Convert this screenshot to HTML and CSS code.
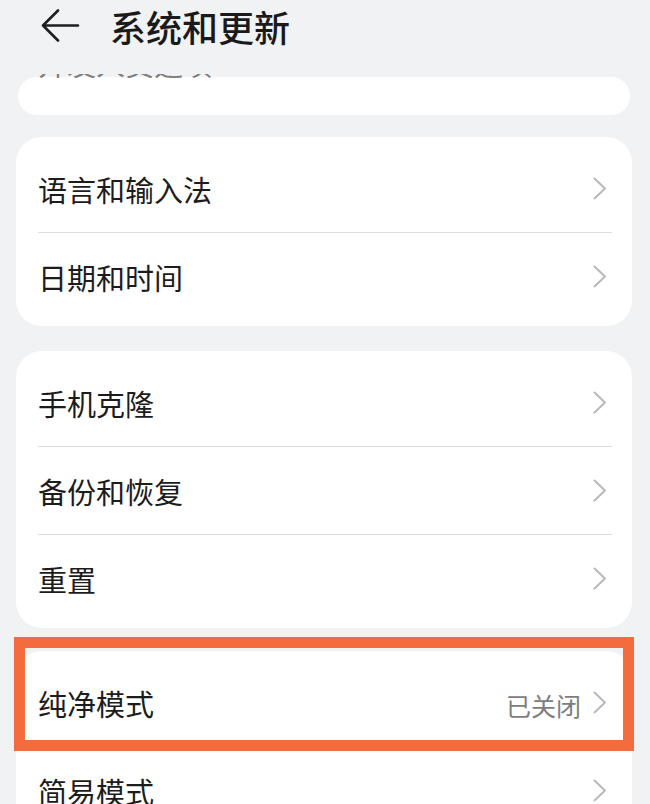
FILE: index.html
```html
<!DOCTYPE html>
<html lang="zh-CN">
<head>
<meta charset="utf-8">
<title>系统和更新</title>
<link rel="stylesheet" href="styles.css">
</head>
<body>
<div class="page">
  <header class="header">
    <svg class="back" width="40" height="34" viewBox="0 0 40 34" aria-hidden="true">
      <path d="M3 16.5 H38 M18 1.5 L3 16.5 L18 31.5" fill="none" stroke="#1f1f1f" stroke-width="2.6" stroke-linecap="round" stroke-linejoin="round"/>
    </svg>
    <h1 class="title">系统和更新</h1>
  </header>

  <div class="peek">
    <div class="peek-clip"><span class="peek-text">开发人员选项</span></div>
  </div>

  <section class="card">
    <div class="row"><span class="label">语言和输入法</span><svg class="chev" width="14" height="23" viewBox="0 0 14 23"><polyline points="1.5,1.5 12,11.5 1.5,21.5" fill="none" stroke="#b9b9b9" stroke-width="2" stroke-linecap="round" stroke-linejoin="round"/></svg></div>
    <div class="divider"></div>
    <div class="row"><span class="label">日期和时间</span><svg class="chev" width="14" height="23" viewBox="0 0 14 23"><polyline points="1.5,1.5 12,11.5 1.5,21.5" fill="none" stroke="#b9b9b9" stroke-width="2" stroke-linecap="round" stroke-linejoin="round"/></svg></div>
  </section>

  <section class="card">
    <div class="row"><span class="label">手机克隆</span><svg class="chev" width="14" height="23" viewBox="0 0 14 23"><polyline points="1.5,1.5 12,11.5 1.5,21.5" fill="none" stroke="#b9b9b9" stroke-width="2" stroke-linecap="round" stroke-linejoin="round"/></svg></div>
    <div class="divider"></div>
    <div class="row"><span class="label">备份和恢复</span><svg class="chev" width="14" height="23" viewBox="0 0 14 23"><polyline points="1.5,1.5 12,11.5 1.5,21.5" fill="none" stroke="#b9b9b9" stroke-width="2" stroke-linecap="round" stroke-linejoin="round"/></svg></div>
    <div class="divider"></div>
    <div class="row"><span class="label">重置</span><svg class="chev" width="14" height="23" viewBox="0 0 14 23"><polyline points="1.5,1.5 12,11.5 1.5,21.5" fill="none" stroke="#b9b9b9" stroke-width="2" stroke-linecap="round" stroke-linejoin="round"/></svg></div>
  </section>

  <section class="card card-last">
    <div class="row"><span class="label">纯净模式</span><span class="value">已关闭</span><svg class="chev" width="14" height="23" viewBox="0 0 14 23"><polyline points="1.5,1.5 12,11.5 1.5,21.5" fill="none" stroke="#b9b9b9" stroke-width="2" stroke-linecap="round" stroke-linejoin="round"/></svg></div>
    <div class="divider"></div>
    <div class="row"><span class="label">简易模式</span><svg class="chev" width="14" height="23" viewBox="0 0 14 23"><polyline points="1.5,1.5 12,11.5 1.5,21.5" fill="none" stroke="#b9b9b9" stroke-width="2" stroke-linecap="round" stroke-linejoin="round"/></svg></div>
    <div class="highlight"></div>
  </section>
</div>
</body>
</html>
```

FILE: styles.css
```css
html, body {
  margin: 0;
  padding: 0;
  height: 804px;
  overflow: hidden;
  background: #f1f2f4;
}

body {
  font-family: "Noto Sans CJK SC", "Noto Sans", sans-serif;
  color: #1c1c1c;
}

.page {
  display: flex;
  flex-direction: column;
}

.header {
  height: 58px;
  display: flex;
  align-items: center;
  padding-left: 40px;
}

.back {
  margin-bottom: 6px;
  flex: none;
}

.title {
  margin: 0 0 6px 30px;
  font-size: 36px;
  font-weight: 500;
  line-height: 40px;
  color: #1a1a1a;
}

.peek {
  position: relative;
  margin: 19px 20px 0 18px;
  height: 38px;
  border-radius: 19px;
  background: #ffffff;
}

.peek-clip {
  position: absolute;
  top: -3px;
  left: 20px;
  height: 4px;
  overflow: hidden;
  opacity: 0.6;
}

.peek-text {
  display: block;
  font-size: 29px;
  line-height: 29px;
  margin-top: -25px;
  color: #333;
  white-space: nowrap;
}

.card {
  position: relative;
  margin: 22px 18px 0 16px;
  padding: 8px 0 6px;
  background: #ffffff;
  border-radius: 26px;
}

.card + .card {
  margin-top: 25px;
}

.card.card-last {
  margin-top: 23px;
}

.row {
  height: 87px;
  display: flex;
  align-items: center;
  padding: 0 25px 0 22px;
}

.label {
  flex: 1;
  font-size: 29px;
  line-height: 34px;
  padding-top: 1px;
  color: #1c1c1c;
}

.value {
  font-size: 25px;
  line-height: 30px;
  padding-top: 4px;
  color: #7d7d7d;
  margin-right: 12px;
}

.chev {
  flex: none;
  display: block;
}

.divider {
  height: 1px;
  margin: 0 20px 0 22px;
  background: #dedede;
}

.highlight {
  position: absolute;
  top: -14px;
  left: -2px;
  right: -2px;
  height: 114px;
  border: 11px solid #f46c3e;
  box-sizing: border-box;
  pointer-events: none;
}
```
